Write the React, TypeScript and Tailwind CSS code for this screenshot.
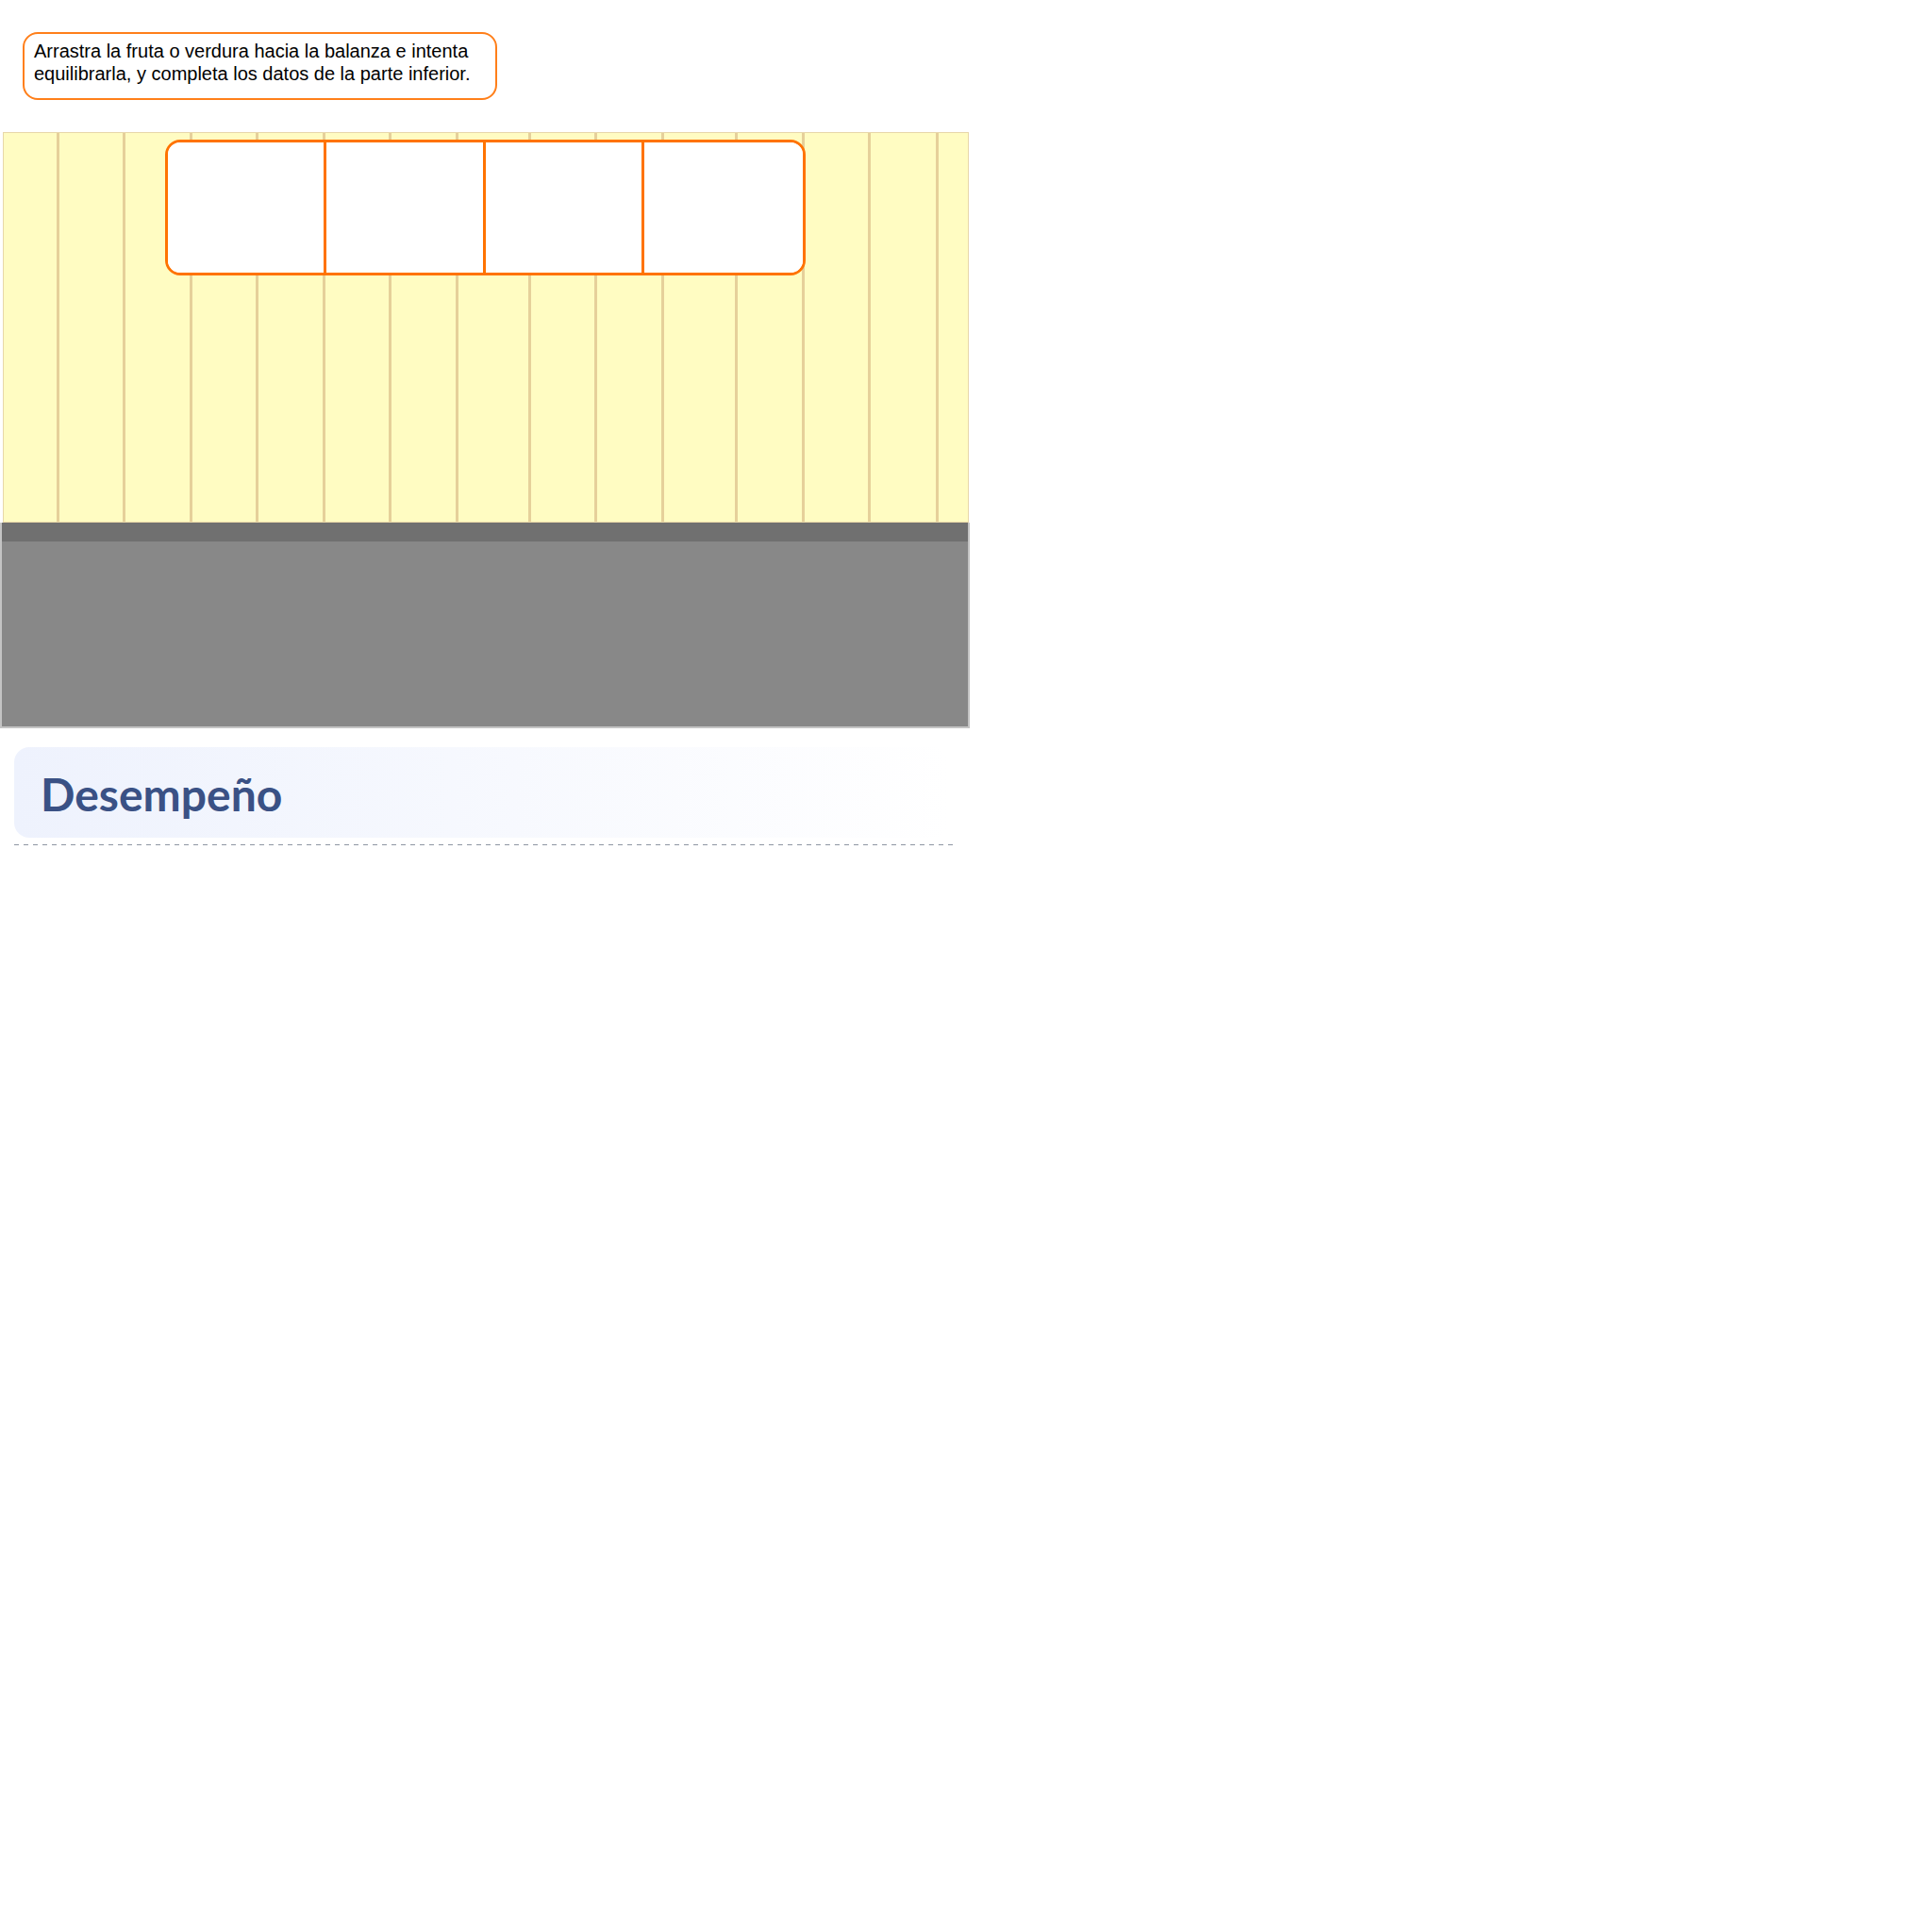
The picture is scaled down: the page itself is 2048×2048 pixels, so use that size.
import React from "react";

const planks = [59, 70, 71, 70, 71, 70, 71, 77, 70, 71, 78, 71, 70, 72, 30];

export default function App() {
  return (
    <div className="w-[2048px] h-[2048px] bg-white flex flex-col items-start" style={{ fontFamily: '"Liberation Sans", Arial, sans-serif' }}>
      <div className="mt-[34px] ml-[24px] w-[503px] h-[72px] border-2 border-[#ff7f1a] rounded-[16px] px-[10px] pt-[6px] text-[20px] leading-[24px] text-black">
        <p>Arrastra la fruta o verdura hacia la balanza e intenta</p>
        <p>equilibrarla, y completa los datos de la parte inferior.</p>
      </div>

      <div className="mt-[34px] flex flex-col">
        <div className="relative ml-[3px] w-[1024px] h-[414px] bg-[#fffcc2] border border-[#e8d7a9] flex">
          {planks.map((w, i) => (
            <div
              key={i}
              className={i < planks.length - 1 ? "h-full shrink-0 border-r-[3px] border-[#e6d09a]" : "h-full flex-1"}
              style={i < planks.length - 1 ? { width: w } : undefined}
            />
          ))}
          <div className="absolute left-[171px] top-[7px] w-[679px] h-[144px] border-[3px] border-[#ff7300] rounded-[16px] bg-white grid grid-cols-4 divide-x-[3px] divide-[#ff7300] overflow-hidden">
            <div className="bg-white" />
            <div className="bg-white" />
            <div className="bg-white" />
            <div className="bg-white" />
          </div>
        </div>
        <div className="w-[1028px] border-x-2 border-b-2 border-[#c4c4c4] flex flex-col">
          <div className="h-[20px] bg-[#707070]" />
          <div className="h-[196px] bg-[#888888]" />
        </div>
      </div>

      <div className="mt-[20px] ml-[15px] w-[998px] flex flex-col gap-[7px]">
        <div className="w-[991px] h-[96px] rounded-[16px] bg-gradient-to-r from-[#eef2fd] to-white flex items-center pl-[28px] pt-[4px]">
          <h2 className="text-[48px] font-bold text-[#3a5185] leading-none" style={{ fontFamily: 'Lato, "Noto Sans", sans-serif' }}>
            Desempeño
          </h2>
        </div>
        <div className="h-[1px] w-full bg-[linear-gradient(to_right,#8f96a3_55%,transparent_55%)] bg-[length:10px_1px] bg-repeat-x" />
      </div>
    </div>
  );
}
